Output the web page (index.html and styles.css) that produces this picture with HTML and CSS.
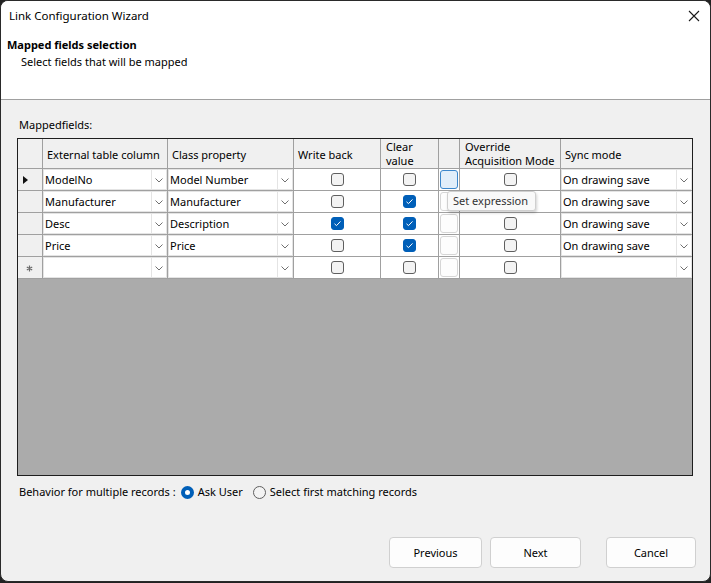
FILE: index.html
```html
<!DOCTYPE html>
<html>
<head>
<meta charset="utf-8">
<link rel="stylesheet" href="styles.css">
</head>
<body>
<div class="dialog">
  <div class="titlebar">
    <span class="title">Link Configuration Wizard</span>
    <svg class="close" width="12" height="12" viewBox="0 0 12 12"><path d="M1 1 L11 11 M11 1 L1 11" stroke="#1a1a1a" stroke-width="1.1" fill="none"/></svg>
  </div>
  <div class="header">
    <div class="h-title">Mapped fields selection</div>
    <div class="h-sub">Select fields that will be mapped</div>
  </div>
  <div class="body">
    <div class="label">Mappedfields:</div>
    <div class="gridwrap">
      <div class="grid">
        <div class="hc rh"></div>
        <div class="hc">External table column</div>
        <div class="hc">Class property</div>
        <div class="hc">Write back</div>
        <div class="hc hc2"><span>Clear</span><span>value</span></div>
        <div class="hc"></div>
        <div class="hc hc2"><span>Override</span><span>Acquisition Mode</span></div>
        <div class="hc">Sync mode</div>

        <!-- row 1 -->
        <div class="rh"><span class="tri"></span></div>
        <div class="cell"><div class="combo"><span class="ct">ModelNo</span><span class="arr"><svg width="8" height="5" viewBox="0 0 8 5"><path d="M0.5 0.5 L4 4 L7.5 0.5" stroke="#707070" fill="none"/></svg></span></div></div>
        <div class="cell"><div class="combo"><span class="ct">Model Number</span><span class="arr"><svg width="8" height="5" viewBox="0 0 8 5"><path d="M0.5 0.5 L4 4 L7.5 0.5" stroke="#707070" fill="none"/></svg></span></div></div>
        <div class="cell center"><span class="cb"></span></div>
        <div class="cell center"><span class="cb"></span></div>
        <div class="cell"><span class="eb active"></span></div>
        <div class="cell center"><span class="cb"></span></div>
        <div class="cell"><div class="combo"><span class="ct">On drawing save</span><span class="arr"><svg width="8" height="5" viewBox="0 0 8 5"><path d="M0.5 0.5 L4 4 L7.5 0.5" stroke="#707070" fill="none"/></svg></span></div></div>

        <!-- row 2 -->
        <div class="rh"></div>
        <div class="cell"><div class="combo"><span class="ct">Manufacturer</span><span class="arr"><svg width="8" height="5" viewBox="0 0 8 5"><path d="M0.5 0.5 L4 4 L7.5 0.5" stroke="#707070" fill="none"/></svg></span></div></div>
        <div class="cell"><div class="combo"><span class="ct">Manufacturer</span><span class="arr"><svg width="8" height="5" viewBox="0 0 8 5"><path d="M0.5 0.5 L4 4 L7.5 0.5" stroke="#707070" fill="none"/></svg></span></div></div>
        <div class="cell center"><span class="cb"></span></div>
        <div class="cell center"><span class="cb on"><svg width="13" height="13" viewBox="0 0 13 13"><path d="M3.5 6.8 L5.5 8.6 L9.5 4.4" stroke="#fff" stroke-width="1" fill="none"/></svg></span></div>
        <div class="cell"><span class="eb"></span></div>
        <div class="cell center"><span class="cb"></span></div>
        <div class="cell"><div class="combo"><span class="ct">On drawing save</span><span class="arr"><svg width="8" height="5" viewBox="0 0 8 5"><path d="M0.5 0.5 L4 4 L7.5 0.5" stroke="#707070" fill="none"/></svg></span></div></div>

        <!-- row 3 -->
        <div class="rh"></div>
        <div class="cell"><div class="combo"><span class="ct">Desc</span><span class="arr"><svg width="8" height="5" viewBox="0 0 8 5"><path d="M0.5 0.5 L4 4 L7.5 0.5" stroke="#707070" fill="none"/></svg></span></div></div>
        <div class="cell"><div class="combo"><span class="ct">Description</span><span class="arr"><svg width="8" height="5" viewBox="0 0 8 5"><path d="M0.5 0.5 L4 4 L7.5 0.5" stroke="#707070" fill="none"/></svg></span></div></div>
        <div class="cell center"><span class="cb on"><svg width="13" height="13" viewBox="0 0 13 13"><path d="M3.5 6.8 L5.5 8.6 L9.5 4.4" stroke="#fff" stroke-width="1" fill="none"/></svg></span></div>
        <div class="cell center"><span class="cb on"><svg width="13" height="13" viewBox="0 0 13 13"><path d="M3.5 6.8 L5.5 8.6 L9.5 4.4" stroke="#fff" stroke-width="1" fill="none"/></svg></span></div>
        <div class="cell"><span class="eb"></span></div>
        <div class="cell center"><span class="cb"></span></div>
        <div class="cell"><div class="combo"><span class="ct">On drawing save</span><span class="arr"><svg width="8" height="5" viewBox="0 0 8 5"><path d="M0.5 0.5 L4 4 L7.5 0.5" stroke="#707070" fill="none"/></svg></span></div></div>

        <!-- row 4 -->
        <div class="rh"></div>
        <div class="cell"><div class="combo"><span class="ct">Price</span><span class="arr"><svg width="8" height="5" viewBox="0 0 8 5"><path d="M0.5 0.5 L4 4 L7.5 0.5" stroke="#707070" fill="none"/></svg></span></div></div>
        <div class="cell"><div class="combo"><span class="ct">Price</span><span class="arr"><svg width="8" height="5" viewBox="0 0 8 5"><path d="M0.5 0.5 L4 4 L7.5 0.5" stroke="#707070" fill="none"/></svg></span></div></div>
        <div class="cell center"><span class="cb"></span></div>
        <div class="cell center"><span class="cb on"><svg width="13" height="13" viewBox="0 0 13 13"><path d="M3.5 6.8 L5.5 8.6 L9.5 4.4" stroke="#fff" stroke-width="1" fill="none"/></svg></span></div>
        <div class="cell"><span class="eb"></span></div>
        <div class="cell center"><span class="cb"></span></div>
        <div class="cell"><div class="combo"><span class="ct">On drawing save</span><span class="arr"><svg width="8" height="5" viewBox="0 0 8 5"><path d="M0.5 0.5 L4 4 L7.5 0.5" stroke="#707070" fill="none"/></svg></span></div></div>

        <!-- new row -->
        <div class="rh"><svg class="star" width="7" height="7" viewBox="0 0 7 7"><path d="M3.5 0.5 V6.5 M0.8 2 L6.2 5 M6.2 2 L0.8 5" stroke="#6a6a6a" stroke-width="1.2"/></svg></div>
        <div class="cell"><div class="combo"><span class="ct"></span><span class="arr"><svg width="8" height="5" viewBox="0 0 8 5"><path d="M0.5 0.5 L4 4 L7.5 0.5" stroke="#707070" fill="none"/></svg></span></div></div>
        <div class="cell"><div class="combo"><span class="ct"></span><span class="arr"><svg width="8" height="5" viewBox="0 0 8 5"><path d="M0.5 0.5 L4 4 L7.5 0.5" stroke="#707070" fill="none"/></svg></span></div></div>
        <div class="cell center"><span class="cb"></span></div>
        <div class="cell center"><span class="cb"></span></div>
        <div class="cell"><span class="eb"></span></div>
        <div class="cell center"><span class="cb"></span></div>
        <div class="cell"><div class="combo"><span class="ct"></span><span class="arr"><svg width="8" height="5" viewBox="0 0 8 5"><path d="M0.5 0.5 L4 4 L7.5 0.5" stroke="#707070" fill="none"/></svg></span></div></div>
      </div>
      <div class="tooltip">Set expression</div>
    </div>
    <div class="behavior">
      <span class="btext">Behavior for multiple records :</span>
      <span class="radio sel"></span>
      <span class="rlabel">Ask User</span>
      <span class="radio"></span>
      <span class="rlabel">Select first matching records</span>
    </div>
    <div class="buttons">
      <button class="btn b-prev">Previous</button>
      <button class="btn b-next">Next</button>
      <button class="btn b-cancel">Cancel</button>
    </div>
  </div>
</div>
</body>
</html>
```

FILE: styles.css
```css
* { box-sizing: border-box; }
html, body { margin: 0; padding: 0; }
body {
  background: #222222;
  width: 711px;
  height: 583px;
  overflow: hidden;
  font-family: "Noto Sans", "Open Sans", sans-serif;
  font-size: 11px;
  color: #000;
}
.dialog {
  width: 711px;
  height: 582px;
  border: 1px solid #2a2a2a;
  border-radius: 8px;
  background: #f0f0f0;
  overflow: hidden;
  display: flex;
  flex-direction: column;
}
.titlebar {
  height: 30px;
  background: #fff;
  display: flex;
  align-items: center;
  justify-content: space-between;
  padding: 0 10px 0 8px;
  flex: none;
}
.title { line-height: 16px; font-size: 11.5px; }
.close { display: block; margin-top: -1px; }
.header {
  height: 69px;
  background: #fff;
  border-bottom: 1px solid #a0a0a0;
  padding: 6px 0 0 6px;
  flex: none;
}
.h-title { font-weight: bold; line-height: 16px; }
.h-sub { line-height: 16px; margin-top: 1px; padding-left: 14px; }
.body {
  flex: 1;
  padding: 17px 14px 0 16px;
  display: flex;
  flex-direction: column;
}
.label { line-height: 16px; padding-left: 2px; margin-bottom: 5px; }
.gridwrap {
  position: relative;
  width: 676px;
  height: 338px;
  border: 1px solid #1e1e1e;
  background: #ababab;
}
.grid {
  display: grid;
  grid-template-columns: 24px 124px 125px 86px 57px 20px 100px 131px;
  grid-template-rows: 29px repeat(5, 21px);
  gap: 1px;
  background: #a0a0a0;
  border-bottom: 1px solid #a0a0a0;
}
.hc {
  background: #f0f0f0;
  display: flex;
  align-items: center;
  padding: 2px 0 0 4px;
  line-height: 14px;
  white-space: nowrap;
}
.hc2 {
  padding: 1px 0 0 5px;
  flex-direction: column;
  align-items: flex-start;
  justify-content: center;
}
.hc2 span { display: block; height: 14px; line-height: 14px; }
.hc.rh { padding: 0; }
.rh {
  background: #f0f0f0;
  display: flex;
  align-items: center;
}
.tri {
  width: 0;
  height: 0;
  margin-left: 5px;
  margin-top: 1px;
  border-left: 5px solid #111;
  border-top: 4.5px solid transparent;
  border-bottom: 4.5px solid transparent;
}
.star { margin-left: 8px; margin-top: 1px; }
.cell {
  background: #fff;
  display: flex;
  align-items: center;
}
.cell.center { justify-content: center; }
.combo {
  width: 100%;
  height: 100%;
  display: flex;
  border: 1px solid #e4e4e4;
  background: #fff;
}
.ct {
  flex: 1;
  padding-left: 1px;
  line-height: 19px;
  white-space: nowrap;
  overflow: hidden;
}
.arr {
  width: 15px;
  border-left: 1px solid #e4e4e4;
  display: flex;
  align-items: center;
  justify-content: center;
}
.arr svg { display: block; margin-top: 1px; }
.cb {
  width: 13px;
  height: 13px;
  border: 1px solid #5f5f5f;
  border-radius: 3px;
  background: #f3f3f3;
  display: block;
  position: relative;
}
.cb.on {
  background: #005fb8;
  border-color: #005fb8;
}
.cb.on svg { position: absolute; left: -1px; top: -1px; }
.eb {
  display: block;
  width: 18px;
  height: 19px;
  margin-left: 1px;
  border: 1px solid #d6d6d6;
  border-radius: 3px;
  background: #fdfdfd;
}
.eb.active {
  background: #e1eefa;
  border-color: #3c87cc;
}
.tooltip {
  position: absolute;
  left: 429px;
  top: 52px;
  width: 89px;
  height: 20px;
  background: #f9f9f9;
  border: 1px solid #cfcfcf;
  border-radius: 3px;
  box-shadow: 1px 2px 3px rgba(0,0,0,0.18);
  padding-left: 5px;
  line-height: 17px;
  color: #333;
  white-space: nowrap;
}
.behavior {
  display: flex;
  align-items: center;
  height: 16px;
  margin-top: 8px;
  padding-left: 2px;
}
.btext { line-height: 16px; }
.radio {
  width: 13px;
  height: 13px;
  border-radius: 50%;
  border: 1px solid #5f5f5f;
  background: #f3f3f3;
  margin-left: 5px;
  margin-right: 4px;
  flex: none;
}
.radio.sel {
  border: 4px solid #005fb8;
  background: #fff;
}
.rlabel { line-height: 16px; margin-right: 5px; }
.buttons {
  display: flex;
  justify-content: flex-end;
  margin-top: 37px;
}
.btn {
  font-family: inherit;
  font-size: 11px;
  color: #000;
  height: 31px;
  background: #fdfdfd;
  border: 1px solid #d0d0d0;
  border-radius: 4px;
  padding: 0;
}
.b-prev { width: 93px; margin-right: 8px; }
.b-next { width: 91px; margin-right: 25px; }
.b-cancel { width: 90px; }
```
